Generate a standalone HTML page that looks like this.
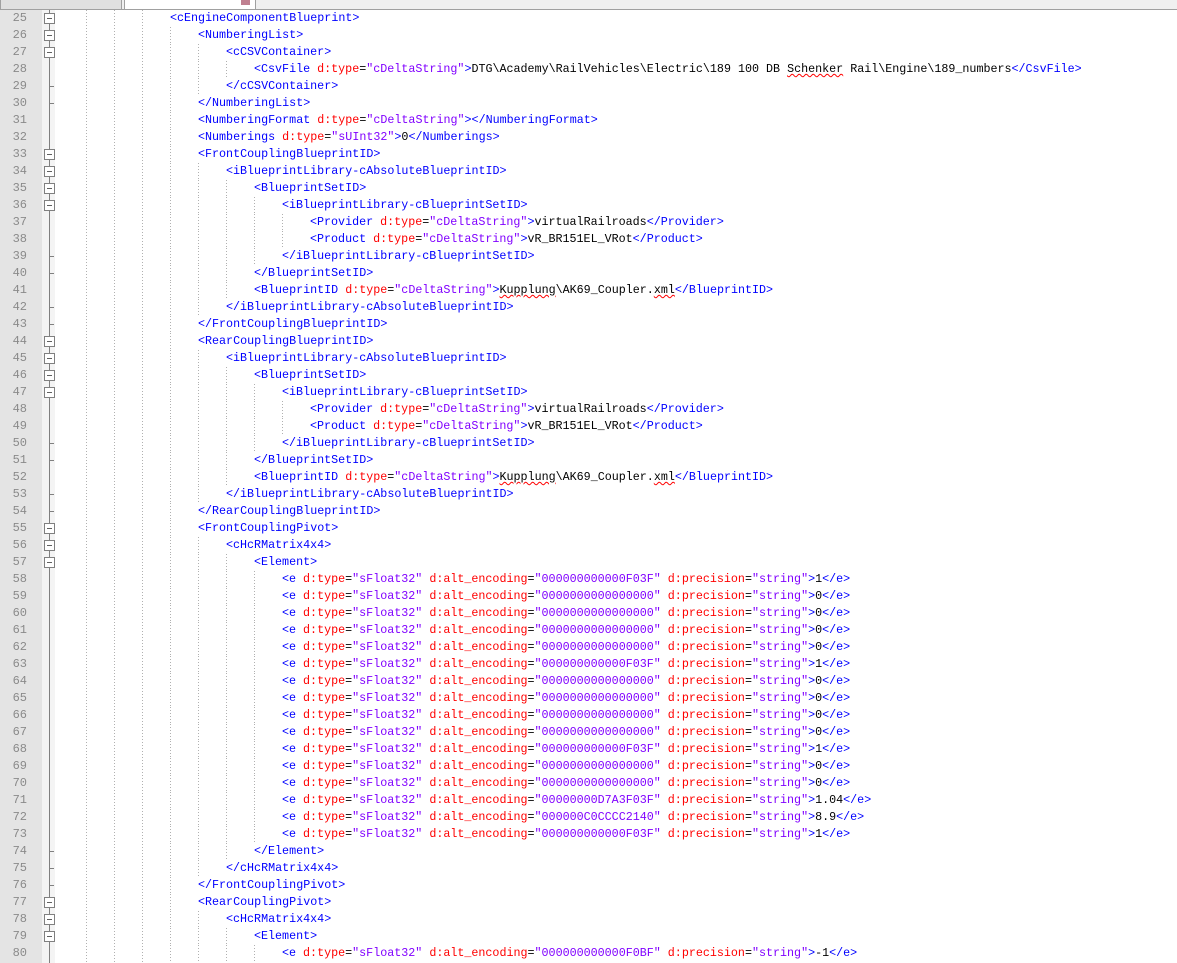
<!DOCTYPE html>
<html><head><meta charset="utf-8"><style>
body{margin:0;width:1177px;height:963px;overflow:hidden;background:#fff;font-family:"Liberation Mono",monospace;font-size:11.7px;position:relative}
.tabs{position:absolute;left:0;top:0;width:1177px;height:9px;background:#f0f0f0;border-bottom:1px solid #a0a0a0}
.tab{position:absolute;top:0;height:9px;border:1px solid #a0a0a0;border-top:none;background:#e0e0e0}
.gn{position:absolute;left:0;top:10px;width:42px;height:953px;background:#e4e4e4}
.gf{position:absolute;left:42px;top:10px;width:13px;height:953px;background:#f4f4f4}
.fl{position:absolute;left:49px;top:10px;width:1px;height:953px;background:#808080}
.gd{position:absolute;top:10px;width:1px;height:953px;background:repeating-linear-gradient(#b0b0b0 0 1px,transparent 1px 3px)}
.l{position:absolute;left:0;width:1177px;height:17px;line-height:17px}
.n{position:absolute;left:0;width:27px;text-align:right;color:#8a8a8a;font-size:12px}
.b{position:absolute;left:44px;top:3px;width:9px;height:9px;border:1px solid #808080;background:#fff}
.b::after{content:"";position:absolute;left:2px;top:4px;width:5px;height:1px;background:#606060}
.k{position:absolute;left:49px;top:8px;width:5px;height:1px;background:#808080}
.c{position:absolute;top:0;white-space:pre;color:#000}
.t{color:#0000ff}.a{color:#ff0000}.v{color:#8000ff}
.s{text-decoration:underline wavy #ff0000;text-decoration-thickness:1px}
.L1,.L2,.L3,.L4,.L5{background-repeat:no-repeat}
.L1{background-image:repeating-linear-gradient(#b0b0b0 0 1px,transparent 1px 3px);background-size:1px 17px;background-position:170px 0}
.L2{background-image:repeating-linear-gradient(#b0b0b0 0 1px,transparent 1px 3px),repeating-linear-gradient(#b0b0b0 0 1px,transparent 1px 3px);background-size:1px 17px;background-position:170px 0,198px 0}
.L3{background-image:repeating-linear-gradient(#b0b0b0 0 1px,transparent 1px 3px),repeating-linear-gradient(#b0b0b0 0 1px,transparent 1px 3px),repeating-linear-gradient(#b0b0b0 0 1px,transparent 1px 3px);background-size:1px 17px;background-position:170px 0,198px 0,226px 0}
.L4{background-image:repeating-linear-gradient(#b0b0b0 0 1px,transparent 1px 3px),repeating-linear-gradient(#b0b0b0 0 1px,transparent 1px 3px),repeating-linear-gradient(#b0b0b0 0 1px,transparent 1px 3px),repeating-linear-gradient(#b0b0b0 0 1px,transparent 1px 3px);background-size:1px 17px;background-position:170px 0,198px 0,226px 0,254px 0}
.L5{background-image:repeating-linear-gradient(#b0b0b0 0 1px,transparent 1px 3px),repeating-linear-gradient(#b0b0b0 0 1px,transparent 1px 3px),repeating-linear-gradient(#b0b0b0 0 1px,transparent 1px 3px),repeating-linear-gradient(#b0b0b0 0 1px,transparent 1px 3px),repeating-linear-gradient(#b0b0b0 0 1px,transparent 1px 3px);background-size:1px 17px;background-position:170px 0,198px 0,226px 0,254px 0,282px 0}
</style></head><body>
<div class="tabs"><div class="tab" style="left:0;width:120px"></div><div class="tab" style="left:124px;width:130px;background:#fff"></div><div style="position:absolute;left:241px;top:0;width:9px;height:5px;background:#c08090"></div></div>
<div class="gn"></div><div class="gf"></div><div class="fl"></div>
<div class="gd" style="left:86px"></div><div class="gd" style="left:114px"></div><div class="gd" style="left:142px"></div>

<div class="l" style="top:10px"><span class="n">25</span><span class="b"></span><span class="c" style="left:170px"><span class="t">&lt;cEngineComponentBlueprint&gt;</span></span></div>
<div class="l L1" style="top:27px"><span class="n">26</span><span class="b"></span><span class="c" style="left:198px"><span class="t">&lt;NumberingList&gt;</span></span></div>
<div class="l L2" style="top:44px"><span class="n">27</span><span class="b"></span><span class="c" style="left:226px"><span class="t">&lt;cCSVContainer&gt;</span></span></div>
<div class="l L3" style="top:61px"><span class="n">28</span><span class="c" style="left:254px"><span class="t">&lt;CsvFile </span><span class="a">d:type</span>=<span class="v">"cDeltaString"</span><span class="t">&gt;</span>DTG\Academy\RailVehicles\Electric\189 100 DB <span class="s">Schenker</span> Rail\Engine\189_numbers<span class="t">&lt;/CsvFile&gt;</span></span></div>
<div class="l L2" style="top:78px"><span class="n">29</span><span class="k"></span><span class="c" style="left:226px"><span class="t">&lt;/cCSVContainer&gt;</span></span></div>
<div class="l L1" style="top:95px"><span class="n">30</span><span class="k"></span><span class="c" style="left:198px"><span class="t">&lt;/NumberingList&gt;</span></span></div>
<div class="l L1" style="top:112px"><span class="n">31</span><span class="c" style="left:198px"><span class="t">&lt;NumberingFormat </span><span class="a">d:type</span>=<span class="v">"cDeltaString"</span><span class="t">&gt;&lt;/NumberingFormat&gt;</span></span></div>
<div class="l L1" style="top:129px"><span class="n">32</span><span class="c" style="left:198px"><span class="t">&lt;Numberings </span><span class="a">d:type</span>=<span class="v">"sUInt32"</span><span class="t">&gt;</span>0<span class="t">&lt;/Numberings&gt;</span></span></div>
<div class="l L1" style="top:146px"><span class="n">33</span><span class="b"></span><span class="c" style="left:198px"><span class="t">&lt;FrontCouplingBlueprintID&gt;</span></span></div>
<div class="l L2" style="top:163px"><span class="n">34</span><span class="b"></span><span class="c" style="left:226px"><span class="t">&lt;iBlueprintLibrary-cAbsoluteBlueprintID&gt;</span></span></div>
<div class="l L3" style="top:180px"><span class="n">35</span><span class="b"></span><span class="c" style="left:254px"><span class="t">&lt;BlueprintSetID&gt;</span></span></div>
<div class="l L4" style="top:197px"><span class="n">36</span><span class="b"></span><span class="c" style="left:282px"><span class="t">&lt;iBlueprintLibrary-cBlueprintSetID&gt;</span></span></div>
<div class="l L5" style="top:214px"><span class="n">37</span><span class="c" style="left:310px"><span class="t">&lt;Provider </span><span class="a">d:type</span>=<span class="v">"cDeltaString"</span><span class="t">&gt;</span>virtualRailroads<span class="t">&lt;/Provider&gt;</span></span></div>
<div class="l L5" style="top:231px"><span class="n">38</span><span class="c" style="left:310px"><span class="t">&lt;Product </span><span class="a">d:type</span>=<span class="v">"cDeltaString"</span><span class="t">&gt;</span>vR_BR151EL_VRot<span class="t">&lt;/Product&gt;</span></span></div>
<div class="l L4" style="top:248px"><span class="n">39</span><span class="k"></span><span class="c" style="left:282px"><span class="t">&lt;/iBlueprintLibrary-cBlueprintSetID&gt;</span></span></div>
<div class="l L3" style="top:265px"><span class="n">40</span><span class="k"></span><span class="c" style="left:254px"><span class="t">&lt;/BlueprintSetID&gt;</span></span></div>
<div class="l L3" style="top:282px"><span class="n">41</span><span class="c" style="left:254px"><span class="t">&lt;BlueprintID </span><span class="a">d:type</span>=<span class="v">"cDeltaString"</span><span class="t">&gt;</span><span class="s">Kupplung</span>\AK69_Coupler.<span class="s">xml</span><span class="t">&lt;/BlueprintID&gt;</span></span></div>
<div class="l L2" style="top:299px"><span class="n">42</span><span class="k"></span><span class="c" style="left:226px"><span class="t">&lt;/iBlueprintLibrary-cAbsoluteBlueprintID&gt;</span></span></div>
<div class="l L1" style="top:316px"><span class="n">43</span><span class="k"></span><span class="c" style="left:198px"><span class="t">&lt;/FrontCouplingBlueprintID&gt;</span></span></div>
<div class="l L1" style="top:333px"><span class="n">44</span><span class="b"></span><span class="c" style="left:198px"><span class="t">&lt;RearCouplingBlueprintID&gt;</span></span></div>
<div class="l L2" style="top:350px"><span class="n">45</span><span class="b"></span><span class="c" style="left:226px"><span class="t">&lt;iBlueprintLibrary-cAbsoluteBlueprintID&gt;</span></span></div>
<div class="l L3" style="top:367px"><span class="n">46</span><span class="b"></span><span class="c" style="left:254px"><span class="t">&lt;BlueprintSetID&gt;</span></span></div>
<div class="l L4" style="top:384px"><span class="n">47</span><span class="b"></span><span class="c" style="left:282px"><span class="t">&lt;iBlueprintLibrary-cBlueprintSetID&gt;</span></span></div>
<div class="l L5" style="top:401px"><span class="n">48</span><span class="c" style="left:310px"><span class="t">&lt;Provider </span><span class="a">d:type</span>=<span class="v">"cDeltaString"</span><span class="t">&gt;</span>virtualRailroads<span class="t">&lt;/Provider&gt;</span></span></div>
<div class="l L5" style="top:418px"><span class="n">49</span><span class="c" style="left:310px"><span class="t">&lt;Product </span><span class="a">d:type</span>=<span class="v">"cDeltaString"</span><span class="t">&gt;</span>vR_BR151EL_VRot<span class="t">&lt;/Product&gt;</span></span></div>
<div class="l L4" style="top:435px"><span class="n">50</span><span class="k"></span><span class="c" style="left:282px"><span class="t">&lt;/iBlueprintLibrary-cBlueprintSetID&gt;</span></span></div>
<div class="l L3" style="top:452px"><span class="n">51</span><span class="k"></span><span class="c" style="left:254px"><span class="t">&lt;/BlueprintSetID&gt;</span></span></div>
<div class="l L3" style="top:469px"><span class="n">52</span><span class="c" style="left:254px"><span class="t">&lt;BlueprintID </span><span class="a">d:type</span>=<span class="v">"cDeltaString"</span><span class="t">&gt;</span><span class="s">Kupplung</span>\AK69_Coupler.<span class="s">xml</span><span class="t">&lt;/BlueprintID&gt;</span></span></div>
<div class="l L2" style="top:486px"><span class="n">53</span><span class="k"></span><span class="c" style="left:226px"><span class="t">&lt;/iBlueprintLibrary-cAbsoluteBlueprintID&gt;</span></span></div>
<div class="l L1" style="top:503px"><span class="n">54</span><span class="k"></span><span class="c" style="left:198px"><span class="t">&lt;/RearCouplingBlueprintID&gt;</span></span></div>
<div class="l L1" style="top:520px"><span class="n">55</span><span class="b"></span><span class="c" style="left:198px"><span class="t">&lt;FrontCouplingPivot&gt;</span></span></div>
<div class="l L2" style="top:537px"><span class="n">56</span><span class="b"></span><span class="c" style="left:226px"><span class="t">&lt;cHcRMatrix4x4&gt;</span></span></div>
<div class="l L3" style="top:554px"><span class="n">57</span><span class="b"></span><span class="c" style="left:254px"><span class="t">&lt;Element&gt;</span></span></div>
<div class="l L4" style="top:571px"><span class="n">58</span><span class="c" style="left:282px"><span class="t">&lt;e </span><span class="a">d:type</span>=<span class="v">"sFloat32"</span> <span class="a">d:alt_encoding</span>=<span class="v">"000000000000F03F"</span> <span class="a">d:precision</span>=<span class="v">"string"</span><span class="t">&gt;</span>1<span class="t">&lt;/e&gt;</span></span></div>
<div class="l L4" style="top:588px"><span class="n">59</span><span class="c" style="left:282px"><span class="t">&lt;e </span><span class="a">d:type</span>=<span class="v">"sFloat32"</span> <span class="a">d:alt_encoding</span>=<span class="v">"0000000000000000"</span> <span class="a">d:precision</span>=<span class="v">"string"</span><span class="t">&gt;</span>0<span class="t">&lt;/e&gt;</span></span></div>
<div class="l L4" style="top:605px"><span class="n">60</span><span class="c" style="left:282px"><span class="t">&lt;e </span><span class="a">d:type</span>=<span class="v">"sFloat32"</span> <span class="a">d:alt_encoding</span>=<span class="v">"0000000000000000"</span> <span class="a">d:precision</span>=<span class="v">"string"</span><span class="t">&gt;</span>0<span class="t">&lt;/e&gt;</span></span></div>
<div class="l L4" style="top:622px"><span class="n">61</span><span class="c" style="left:282px"><span class="t">&lt;e </span><span class="a">d:type</span>=<span class="v">"sFloat32"</span> <span class="a">d:alt_encoding</span>=<span class="v">"0000000000000000"</span> <span class="a">d:precision</span>=<span class="v">"string"</span><span class="t">&gt;</span>0<span class="t">&lt;/e&gt;</span></span></div>
<div class="l L4" style="top:639px"><span class="n">62</span><span class="c" style="left:282px"><span class="t">&lt;e </span><span class="a">d:type</span>=<span class="v">"sFloat32"</span> <span class="a">d:alt_encoding</span>=<span class="v">"0000000000000000"</span> <span class="a">d:precision</span>=<span class="v">"string"</span><span class="t">&gt;</span>0<span class="t">&lt;/e&gt;</span></span></div>
<div class="l L4" style="top:656px"><span class="n">63</span><span class="c" style="left:282px"><span class="t">&lt;e </span><span class="a">d:type</span>=<span class="v">"sFloat32"</span> <span class="a">d:alt_encoding</span>=<span class="v">"000000000000F03F"</span> <span class="a">d:precision</span>=<span class="v">"string"</span><span class="t">&gt;</span>1<span class="t">&lt;/e&gt;</span></span></div>
<div class="l L4" style="top:673px"><span class="n">64</span><span class="c" style="left:282px"><span class="t">&lt;e </span><span class="a">d:type</span>=<span class="v">"sFloat32"</span> <span class="a">d:alt_encoding</span>=<span class="v">"0000000000000000"</span> <span class="a">d:precision</span>=<span class="v">"string"</span><span class="t">&gt;</span>0<span class="t">&lt;/e&gt;</span></span></div>
<div class="l L4" style="top:690px"><span class="n">65</span><span class="c" style="left:282px"><span class="t">&lt;e </span><span class="a">d:type</span>=<span class="v">"sFloat32"</span> <span class="a">d:alt_encoding</span>=<span class="v">"0000000000000000"</span> <span class="a">d:precision</span>=<span class="v">"string"</span><span class="t">&gt;</span>0<span class="t">&lt;/e&gt;</span></span></div>
<div class="l L4" style="top:707px"><span class="n">66</span><span class="c" style="left:282px"><span class="t">&lt;e </span><span class="a">d:type</span>=<span class="v">"sFloat32"</span> <span class="a">d:alt_encoding</span>=<span class="v">"0000000000000000"</span> <span class="a">d:precision</span>=<span class="v">"string"</span><span class="t">&gt;</span>0<span class="t">&lt;/e&gt;</span></span></div>
<div class="l L4" style="top:724px"><span class="n">67</span><span class="c" style="left:282px"><span class="t">&lt;e </span><span class="a">d:type</span>=<span class="v">"sFloat32"</span> <span class="a">d:alt_encoding</span>=<span class="v">"0000000000000000"</span> <span class="a">d:precision</span>=<span class="v">"string"</span><span class="t">&gt;</span>0<span class="t">&lt;/e&gt;</span></span></div>
<div class="l L4" style="top:741px"><span class="n">68</span><span class="c" style="left:282px"><span class="t">&lt;e </span><span class="a">d:type</span>=<span class="v">"sFloat32"</span> <span class="a">d:alt_encoding</span>=<span class="v">"000000000000F03F"</span> <span class="a">d:precision</span>=<span class="v">"string"</span><span class="t">&gt;</span>1<span class="t">&lt;/e&gt;</span></span></div>
<div class="l L4" style="top:758px"><span class="n">69</span><span class="c" style="left:282px"><span class="t">&lt;e </span><span class="a">d:type</span>=<span class="v">"sFloat32"</span> <span class="a">d:alt_encoding</span>=<span class="v">"0000000000000000"</span> <span class="a">d:precision</span>=<span class="v">"string"</span><span class="t">&gt;</span>0<span class="t">&lt;/e&gt;</span></span></div>
<div class="l L4" style="top:775px"><span class="n">70</span><span class="c" style="left:282px"><span class="t">&lt;e </span><span class="a">d:type</span>=<span class="v">"sFloat32"</span> <span class="a">d:alt_encoding</span>=<span class="v">"0000000000000000"</span> <span class="a">d:precision</span>=<span class="v">"string"</span><span class="t">&gt;</span>0<span class="t">&lt;/e&gt;</span></span></div>
<div class="l L4" style="top:792px"><span class="n">71</span><span class="c" style="left:282px"><span class="t">&lt;e </span><span class="a">d:type</span>=<span class="v">"sFloat32"</span> <span class="a">d:alt_encoding</span>=<span class="v">"00000000D7A3F03F"</span> <span class="a">d:precision</span>=<span class="v">"string"</span><span class="t">&gt;</span>1.04<span class="t">&lt;/e&gt;</span></span></div>
<div class="l L4" style="top:809px"><span class="n">72</span><span class="c" style="left:282px"><span class="t">&lt;e </span><span class="a">d:type</span>=<span class="v">"sFloat32"</span> <span class="a">d:alt_encoding</span>=<span class="v">"000000C0CCCC2140"</span> <span class="a">d:precision</span>=<span class="v">"string"</span><span class="t">&gt;</span>8.9<span class="t">&lt;/e&gt;</span></span></div>
<div class="l L4" style="top:826px"><span class="n">73</span><span class="c" style="left:282px"><span class="t">&lt;e </span><span class="a">d:type</span>=<span class="v">"sFloat32"</span> <span class="a">d:alt_encoding</span>=<span class="v">"000000000000F03F"</span> <span class="a">d:precision</span>=<span class="v">"string"</span><span class="t">&gt;</span>1<span class="t">&lt;/e&gt;</span></span></div>
<div class="l L3" style="top:843px"><span class="n">74</span><span class="k"></span><span class="c" style="left:254px"><span class="t">&lt;/Element&gt;</span></span></div>
<div class="l L2" style="top:860px"><span class="n">75</span><span class="k"></span><span class="c" style="left:226px"><span class="t">&lt;/cHcRMatrix4x4&gt;</span></span></div>
<div class="l L1" style="top:877px"><span class="n">76</span><span class="k"></span><span class="c" style="left:198px"><span class="t">&lt;/FrontCouplingPivot&gt;</span></span></div>
<div class="l L1" style="top:894px"><span class="n">77</span><span class="b"></span><span class="c" style="left:198px"><span class="t">&lt;RearCouplingPivot&gt;</span></span></div>
<div class="l L2" style="top:911px"><span class="n">78</span><span class="b"></span><span class="c" style="left:226px"><span class="t">&lt;cHcRMatrix4x4&gt;</span></span></div>
<div class="l L3" style="top:928px"><span class="n">79</span><span class="b"></span><span class="c" style="left:254px"><span class="t">&lt;Element&gt;</span></span></div>
<div class="l L4" style="top:945px"><span class="n">80</span><span class="c" style="left:282px"><span class="t">&lt;e </span><span class="a">d:type</span>=<span class="v">"sFloat32"</span> <span class="a">d:alt_encoding</span>=<span class="v">"000000000000F0BF"</span> <span class="a">d:precision</span>=<span class="v">"string"</span><span class="t">&gt;</span>-1<span class="t">&lt;/e&gt;</span></span></div>
</body></html>
